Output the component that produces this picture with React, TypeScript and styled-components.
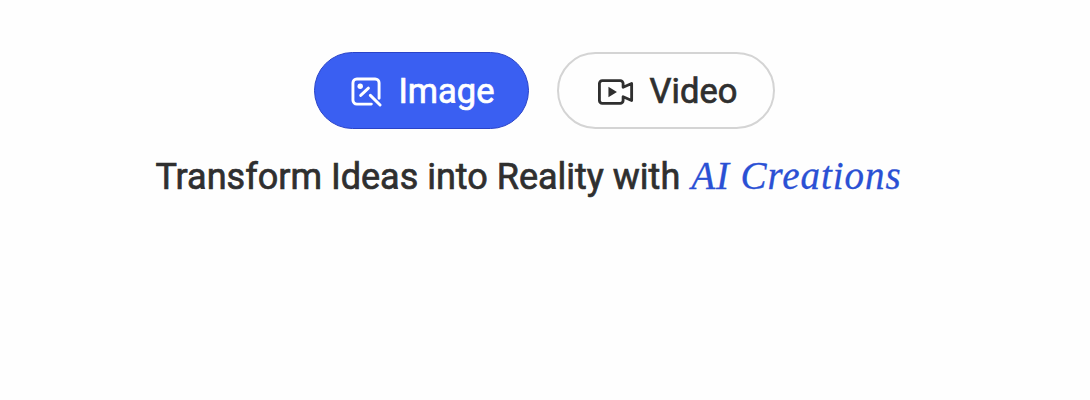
import styled, { createGlobalStyle } from 'styled-components';

const GlobalStyle = createGlobalStyle`
	html, body {
		margin: 0;
		background: #fefefe;
	}
`;

const Page = styled.div`
	display: flex;
	flex-direction: column;
	align-items: center;
	height: 400px;
	padding: 52px 0 0 0;
	box-sizing: border-box;
	font-family: Roboto, "Liberation Sans", sans-serif;
`;

const Tabs = styled.div`
	display: flex;
	gap: 28px;
	margin-left: -1px;
`;

const Tab = styled.button<{ $active?: boolean; $width: number }>`
	display: flex;
	align-items: center;
	justify-content: center;
	gap: 16px;
	box-sizing: border-box;
	width: ${ ( props ) => props.$width }px;
	height: 77px;
	padding: 2px 0 0 3px;
	border-radius: 38.5px;
	border: ${ ( props ) =>
		props.$active ? '1px solid #2a43c8' : '2px solid #d4d4d4' };
	background: ${ ( props ) => ( props.$active ? '#3a5ff2' : '#fefefe' ) };
	color: ${ ( props ) => ( props.$active ? '#ffffff' : '#2f2f2f' ) };
	font-family: inherit;
	font-size: 34.5px;
	font-weight: 400;
	-webkit-text-stroke: 0.7px currentColor;
	line-height: 1;
	cursor: pointer;
`;

const Heading = styled.h1`
	margin: 26px 0 0;
	padding-right: 33px;
	font-size: 36px;
	font-weight: 400;
	-webkit-text-stroke: 0.7px currentColor;
	line-height: 42px;
	color: #2f2f2f;
	white-space: nowrap;
`;

const Accent = styled.em`
	margin-left: 2px;
	font-family: "Liberation Serif", serif;
	font-style: italic;
	font-weight: 400;
	font-size: 39px;
	letter-spacing: 0.95px;
	-webkit-text-stroke: 0.3px currentColor;
	color: #2a50d4;
`;

const ImageIcon = () => (
	<svg width="31" height="30" viewBox="0 0 32 31" fill="none" stroke="currentColor" strokeWidth="3" strokeLinecap="round" strokeLinejoin="round">
		<path d="M21 28H6a4 4 0 0 1-4-4V6a4 4 0 0 1 4-4h19a4 4 0 0 1 4 4v16" />
		<circle cx="9.5" cy="9.5" r="2.8" fill="currentColor" stroke="none" />
		<path d="M10 19l8-7.5" />
		<path d="M20 19l10 10" />
	</svg>
);

const VideoIcon = () => (
	<svg width="36" height="28" viewBox="0 0 38 28" fill="none" stroke="currentColor" strokeWidth="3" strokeLinejoin="round">
		<path d="M4.5 2h19a3 3 0 0 1 3 3v4l9-4v18l-9-4v4a3 3 0 0 1-3 3h-19a3 3 0 0 1-3-3V5a3 3 0 0 1 3-3z" />
		<path d="M11 8.5l9 5.5-9 5.5z" fill="currentColor" stroke="none" />
	</svg>
);

export default function App() {
	return (
		<Page>
			<GlobalStyle />
			<Tabs>
				<Tab $active $width={ 215 }>
					<ImageIcon />
					Image
				</Tab>
				<Tab $width={ 218 }>
					<VideoIcon />
					Video
				</Tab>
			</Tabs>
			<Heading>
				Transform Ideas into Reality with <Accent>AI Creations</Accent>
			</Heading>
		</Page>
	);
}
